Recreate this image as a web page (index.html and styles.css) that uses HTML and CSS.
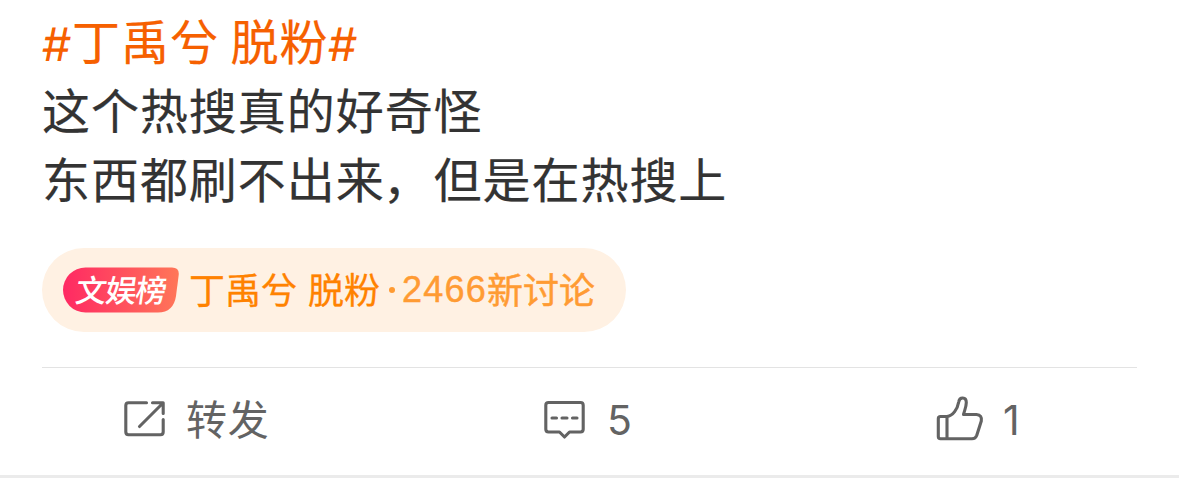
FILE: index.html
```html
<!DOCTYPE html>
<html lang="zh-CN">
<head>
    <meta charset="UTF-8">
    <meta name="viewport" content="width=device-width, initial-scale=1.0">
    <title>微博</title>
    <link rel="stylesheet" href="styles.css">
</head>
<body>
    <article class="post">
        <div class="post-text">
            <p><a href="#" class="topic"><span class="hash">#</span>丁禹兮 脱粉<span class="hash">#</span></a></p>
            <p>这个热搜真的好奇怪</p>
            <p>东西都刷不出来<span class="comma">，</span>但是在热搜上</p>
        </div>

        <a href="#" class="hot">
            <span class="badge">
                <svg class="badge-bg" width="116" height="46" viewBox="0 0 116 46">
                    <defs>
                        <linearGradient id="badge-fill" x1="0" y1="0" x2="1" y2="0">
                            <stop offset="0" stop-color="#ff2963"/>
                            <stop offset="1" stop-color="#ff7658"/>
                        </linearGradient>
                    </defs>
                    <path fill="url(#badge-fill)" d="M22.500 0.500H109Q116.500 0.500 115.700 8L113 29Q110.500 45.500 95 45.500H22.500A22.500 22.500 0 0 1 22.500 0.500Z"/>
                </svg>
                <span class="badge-text">文娱榜</span>
            </span>
            <span class="hot-name">丁禹兮 脱粉</span>
            <span class="hot-count"><i class="dot"></i><span class="num">2466</span><span class="unit">新讨论</span></span>
        </a>

        <footer class="actions">
            <a href="#" class="action share">
                <svg width="42" height="36" viewBox="0 0 42 36">
                    <path d="M22.500 1.800H4.500Q1.800 1.800 1.800 4.500V31Q1.800 33.700 4.500 33.700H36.500Q39.200 33.700 39.200 31V18.500M28.500 1.800H39.200V12.500M38.500 2.500L15.500 25.500"/>
                </svg>
                <span>转发</span>
            </a>
            <a href="#" class="action comment">
                <svg width="42" height="40" viewBox="0 0 42 40">
                    <path d="M4.500 2.500H36.500Q39.200 2.500 39.200 5.200V29.300Q39.200 32 36.500 32H25.500L20.500 37L15.500 32H4.500Q1.800 32 1.800 29.300V5.200Q1.800 2.500 4.500 2.500Z"/>
                    <path d="M8 18H12.500M18 18H23M28.500 18H33"/>
                </svg>
                <span>5</span>
            </a>
            <a href="#" class="action like">
                <svg width="48" height="46" viewBox="0 0 48 46">
                    <path d="M11 20.500H4.500Q2.300 20.500 2.300 22.700V40.500Q2.300 42.700 4.500 42.700H36Q39.500 42.700 40.700 39.500L45.300 25Q46.300 19 40.500 18.500H27.500C28.500 14.500 30.300 11 30.300 6.500C30.300 0.500 23.500 0.500 22.700 6C21.500 13 17 20 11 20.500V42.700"/>
                </svg>
                <span>1</span>
            </a>
        </footer>
    </article>
</body>
</html>
```

FILE: styles.css
```css
*{
    margin: 0;
    padding: 0;
    box-sizing: border-box;
}

body{
    background-color: #fff;
    font-family: "Noto Sans CJK SC", sans-serif;
    overflow: hidden;
}

a{
    text-decoration: none;
}

.post{
    height: 478px;
    padding: 5px 42px 0;
    border-bottom: 3px solid #ebebeb;
}

.post-text{
    height: 243px;
    font-size: 48px;
    line-height: 69px;
    letter-spacing: 0.95px;
    color: #333;
    white-space: nowrap;
    -webkit-text-stroke: 0.2px;
}

.post-text p{
    height: 69px;
}

.topic{
    color: #f66000;
}

.hash{
    display: inline-block;
    width: 30px;
    font-family: Inter, sans-serif;
    font-size: 46px;
    line-height: 46px;
    vertical-align: -1px;
    transform: skewX(-2deg);
    -webkit-text-stroke: 0;
}

.comma{
    margin: 0 2px 0 -2px;
}

.hot{
    display: flex;
    align-items: center;
    width: 584px;
    height: 84px;
    padding-left: 21px;
    border-radius: 42px;
    background-color: #fff1e3;
    font-size: 36px;
    line-height: 80px;
    color: #ff8200;
    white-space: nowrap;
}

.badge{
    display: grid;
    width: 116px;
    height: 46px;
    margin-right: 10px;
}

.badge-bg, .badge-text{
    grid-area: 1 / 1;
}

.badge-text{
    padding-left: 13px;
    font-size: 31px;
    font-weight: 500;
    line-height: 43px;
    letter-spacing: -1px;
    color: #fff;
    transform: skewX(-8deg);
}

.hot-name{
    height: 84px;
    word-spacing: 3px;
    -webkit-text-stroke: 0.3px;
}

.hot-count{
    display: flex;
    align-items: center;
    height: 84px;
    color: #ff9b33;
    -webkit-text-stroke: 0.5px;
}

.dot{
    width: 6px;
    height: 6px;
    margin: 0 7px 0 9px;
    border-radius: 50%;
    background-color: #ff9b33;
}

.num{
    font-family: "Liberation Sans", sans-serif;
    letter-spacing: 1.2px;
    line-height: 88px;
}

.unit{
    height: 84px;
}

.actions{
    display: grid;
    grid-template-columns: repeat(3, 1fr);
    height: 104px;
    margin-top: 35px;
    border-top: 1px solid #e3e3e3;
}

.action{
    display: flex;
    align-items: center;
    font-size: 41px;
    line-height: 60px;
    color: #636363;
}

.action svg{
    fill: none;
    stroke: #636363;
    stroke-width: 3.1;
    stroke-linecap: round;
    stroke-linejoin: round;
}

.share{
    padding-left: 82px;
}

.share span{
    margin-top: -5px;
    letter-spacing: 0.7px;
}

.share svg{
    margin-top: -1px;
    margin-right: 20px;
}

.comment{
    padding-left: 137px;
}

.comment svg{
    margin-right: 21px;
}

.like{
    padding-left: 164px;
}

.like svg{
    margin-top: -2px;
    margin-right: 19px;
}

.comment span, .like span{
    margin-top: 1px;
    font-family: Inter, sans-serif;
}
```
